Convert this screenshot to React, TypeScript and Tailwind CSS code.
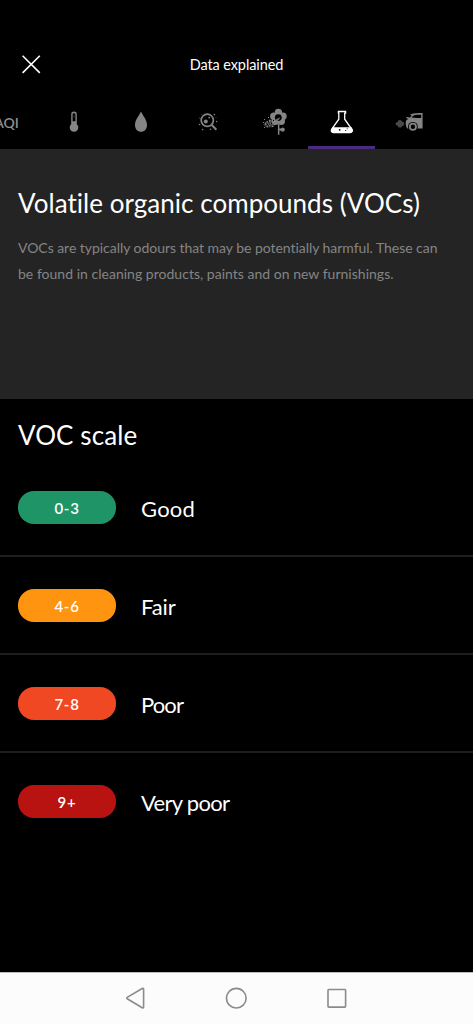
import type { ReactNode } from "react";

const levels = [
  { range: "0-3", label: "Good", pill: "bg-[#1f9466]", tracking: "tracking-[0.2px]" },
  { range: "4-6", label: "Fair", pill: "bg-[#ff9410]", tracking: "tracking-[-0.1px]" },
  { range: "7-8", label: "Poor", pill: "bg-[#f04823]", tracking: "tracking-[-0.9px]" },
  { range: "9+", label: "Very poor", pill: "bg-[#b81311]", tracking: "tracking-[-0.7px]" },
];

function Tab({ active = false, children }: { active?: boolean; children: ReactNode }) {
  return (
    <button
      className={`flex h-[53px] w-[67px] shrink-0 items-center justify-center border-b-3 pt-[2px] ${
        active ? "border-[#4b2a80] text-white" : "border-transparent text-[#858585]"
      }`}
    >
      {children}
    </button>
  );
}

function Thermometer() {
  return (
    <svg width="32" height="32" viewBox="0 0 32 32">
      <path d="M13.2 8.2a2.8 2.8 0 0 1 5.6 0v10a4.3 4.3 0 1 1-5.6 0z" fill="currentColor" />
      <path d="M14.6 8.7a1.4 1.4 0 0 1 2.8 0v6.6h-2.8z" fill="#000" />
      <path d="M15.4 9.2h1.2v2.2h-1.2z" fill="currentColor" opacity="0.35" />
    </svg>
  );
}

function Drop() {
  return (
    <svg width="32" height="32" viewBox="0 0 32 32">
      <path d="M16 5.6c1.4 3.5 6 8.2 6 13.3 0 4.2-2.6 6.8-6 6.8s-6-2.6-6-6.8c0-5.1 4.6-9.8 6-13.3z" fill="currentColor" />
    </svg>
  );
}

function Magnifier() {
  return (
    <svg width="32" height="32" viewBox="0 0 32 32" fill="currentColor">
      <circle cx="15.3" cy="14.3" r="6.1" fill="none" stroke="currentColor" strokeWidth="1.7" />
      <path d="m19.8 19 4.6 4.7" stroke="currentColor" strokeWidth="2" />
      <circle cx="13.8" cy="15.4" r="2" />
      <circle cx="17.2" cy="11.6" r="0.9" />
      <circle cx="22.4" cy="8.6" r="0.8" />
      <circle cx="24.6" cy="15.5" r="0.8" />
      <circle cx="24" cy="11.5" r="0.4" />
      <circle cx="7.6" cy="18.5" r="0.8" />
      <circle cx="10.6" cy="23.6" r="0.8" />
      <circle cx="18.5" cy="23.3" r="0.8" />
      <circle cx="7.8" cy="12" r="0.5" />
      <circle cx="9.8" cy="8.4" r="0.4" />
    </svg>
  );
}

function Flower() {
  return (
    <svg width="36" height="36" viewBox="0 0 36 36" fill="currentColor">
      <g>
        <circle cx="21.4" cy="8.5" r="3.7" />
        <circle cx="26" cy="12.2" r="3.7" />
        <circle cx="24.3" cy="17.3" r="3.7" />
        <circle cx="18.4" cy="17.3" r="3.7" />
        <circle cx="16.8" cy="12.2" r="3.7" />
      </g>
      <circle cx="21.3" cy="13.6" r="3.4" fill="#000" />
      <path d="m17.5 17.4 2.3-2.8 1.8-.4.7-1.2.6 1.6-1.4 1.6-2.2 1.6z" opacity="0.8" />
      <path d="M20.9 20h1.5v10.7h-1.5zM22 24.7l2.4-.5a2 2 0 1 1 0 2.8L22 26z" />
      <path d="M18 16.5 10 17.4l-4 3 3 3.2 6-.2 4.5-3.2z" opacity="0.35" />
      <path
        d="M18 16.5 9 18M19 18 7 21M18 20l-9 3M15 14l-3 4M13 16l-6 4"
        fill="none"
        stroke="currentColor"
        strokeWidth="1.4"
        strokeDasharray="1.2 1.3"
      />
      <path d="M7 15h1v1H7zM11 13h1v1h-1zM6 18h1v1H6zM7 23h1v1H7zM15 22h1.5v1H15z" />
      <path d="M11 17h1v1h-1zM14 19h1v1h-1zM10 20h1v1h-1zM16 16h1v1h-1z" fill="#000" />
    </svg>
  );
}

function Flask() {
  return (
    <svg width="32" height="32" viewBox="0 0 32 32">
      <path
        d="M12.4 5.5h7.2v1.7h-.9v6l7 9.8c1.2 1.9.3 3.5-1.6 3.5H7.4c-1.9 0-2.8-1.6-1.6-3.5l7-9.8v-6h-.4z"
        fill="none"
        stroke="currentColor"
        strokeWidth="1.3"
      />
      <path d="M6.4 21.2h19.2l1.1 2.2c.6 1.7-.5 3.4-2.3 3.4H7.6c-1.8 0-2.9-1.7-2.3-3.4z" fill="currentColor" />
      <circle cx="13.7" cy="23.8" r="0.9" fill="#000" />
      <circle cx="19.7" cy="24.5" r="0.6" fill="#000" />
      <circle cx="21.2" cy="22.8" r="0.5" fill="#000" />
    </svg>
  );
}

function Car() {
  return (
    <svg width="36" height="32" viewBox="0 0 36 32" fill="currentColor">
      <path d="M19 8.4c3-1.1 7-1.5 12.6-1.5v15.7H16.4c-1.3-1.6-2-4.2-1.6-6.6.2-1.6 1-2.6 2.6-3l-2.2-1 .3-1 3.4.4 1.9-1.7z" />
      <path d="M20.6 11.6c.8-1.6 2.4-2.6 5-2.8l4.6-.1v3.4l-4.8-.2z" fill="#000" />
      <circle cx="21.9" cy="20.8" r="4.9" fill="#000" />
      <circle cx="21.9" cy="20.8" r="3.1" fill="none" stroke="currentColor" strokeWidth="1.8" />
      <g opacity="0.55">
        <circle cx="8.9" cy="16.2" r="2.2" />
        <circle cx="11" cy="17.7" r="2.2" />
        <circle cx="9" cy="19.4" r="2.2" />
        <circle cx="6.6" cy="17.8" r="1.9" />
      </g>
    </svg>
  );
}

export default function App() {
  return (
    <div className="flex h-[1024px] w-[473px] flex-col overflow-hidden bg-black font-['Lato',sans-serif] text-white [font-variant-ligatures:none]">
      <header className="grid h-24 grid-cols-[1fr_auto_1fr] items-end pb-[21px]">
        <button aria-label="Close" className="ml-[21px] flex size-5 items-center justify-center">
          <svg width="20" height="20" viewBox="0 0 20 20" fill="none" stroke="currentColor" strokeWidth="1.6">
            <path d="m1.6 0.7 17.2 17.2M18.8 0.7 1.6 17.9" />
          </svg>
        </button>
        <h1 className="text-[14.5px] leading-5 tracking-[-0.1px] whitespace-nowrap">Data explained</h1>
      </header>

      <nav className="-ml-[27px] flex h-[53px] shrink-0">
        <Tab>
          <span className="text-[14px] font-semibold text-[#8f8f8f]">AQI</span>
        </Tab>
        <Tab><Thermometer /></Tab>
        <Tab><Drop /></Tab>
        <Tab><Magnifier /></Tab>
        <Tab><Flower /></Tab>
        <Tab active><Flask /></Tab>
        <Tab><Car /></Tab>
      </nav>

      <section className="h-[250px] shrink-0 bg-[#242424] px-[18px] pt-9">
        <h2 className="text-[26px] leading-9 tracking-[0.04px] whitespace-nowrap">Volatile organic compounds (VOCs)</h2>
        <p className="mt-[14px] text-[14px] leading-[25.5px] whitespace-nowrap text-[#858585]">
          <span className="block tracking-[-0.04px]">VOCs are typically odours that may be potentially harmful. These can</span>
          <span className="block tracking-[0.02px]">be found in cleaning products, paints and on new furnishings.</span>
        </p>
      </section>

      <main className="flex-1">
        <h2 className="h-[60px] px-[18px] pt-[18px] text-[26px] leading-9 tracking-[0.1px]">VOC scale</h2>
        <ul>
          {levels.map((level) => (
            <li
              key={level.label}
              className="flex h-[98px] items-center border-b-2 border-[#1e1e1e] px-[18px] pt-px last:border-transparent"
            >
              <span
                className={`flex h-[33px] w-[98px] items-center justify-center rounded-[16px] pt-[2px] text-[15px] font-semibold tracking-[0.7px] ${level.pill}`}
              >
                {level.range}
              </span>
              <span className={`ml-[25px] pt-[3px] text-[22px] leading-8 ${level.tracking}`}>{level.label}</span>
            </li>
          ))}
        </ul>
      </main>

      <footer className="h-[52px] shrink-0 border-t border-[#bbb] bg-[#fcfcfc]">
        <svg width="473" height="51" viewBox="0 973 473 51" fill="none" stroke="#8b8b8b" strokeWidth="1.6" strokeLinejoin="round">
          <path d="M127.2 997.4q-.9.6 0 1.3l15 9q1.4.6 1.4-.8v-17.6q0-1.4-1.4-.8z" />
          <circle cx="236.3" cy="998.2" r="9.8" />
          <rect x="328" y="989.5" width="17.6" height="17.6" rx="0.8" />
        </svg>
      </footer>
    </div>
  );
}
